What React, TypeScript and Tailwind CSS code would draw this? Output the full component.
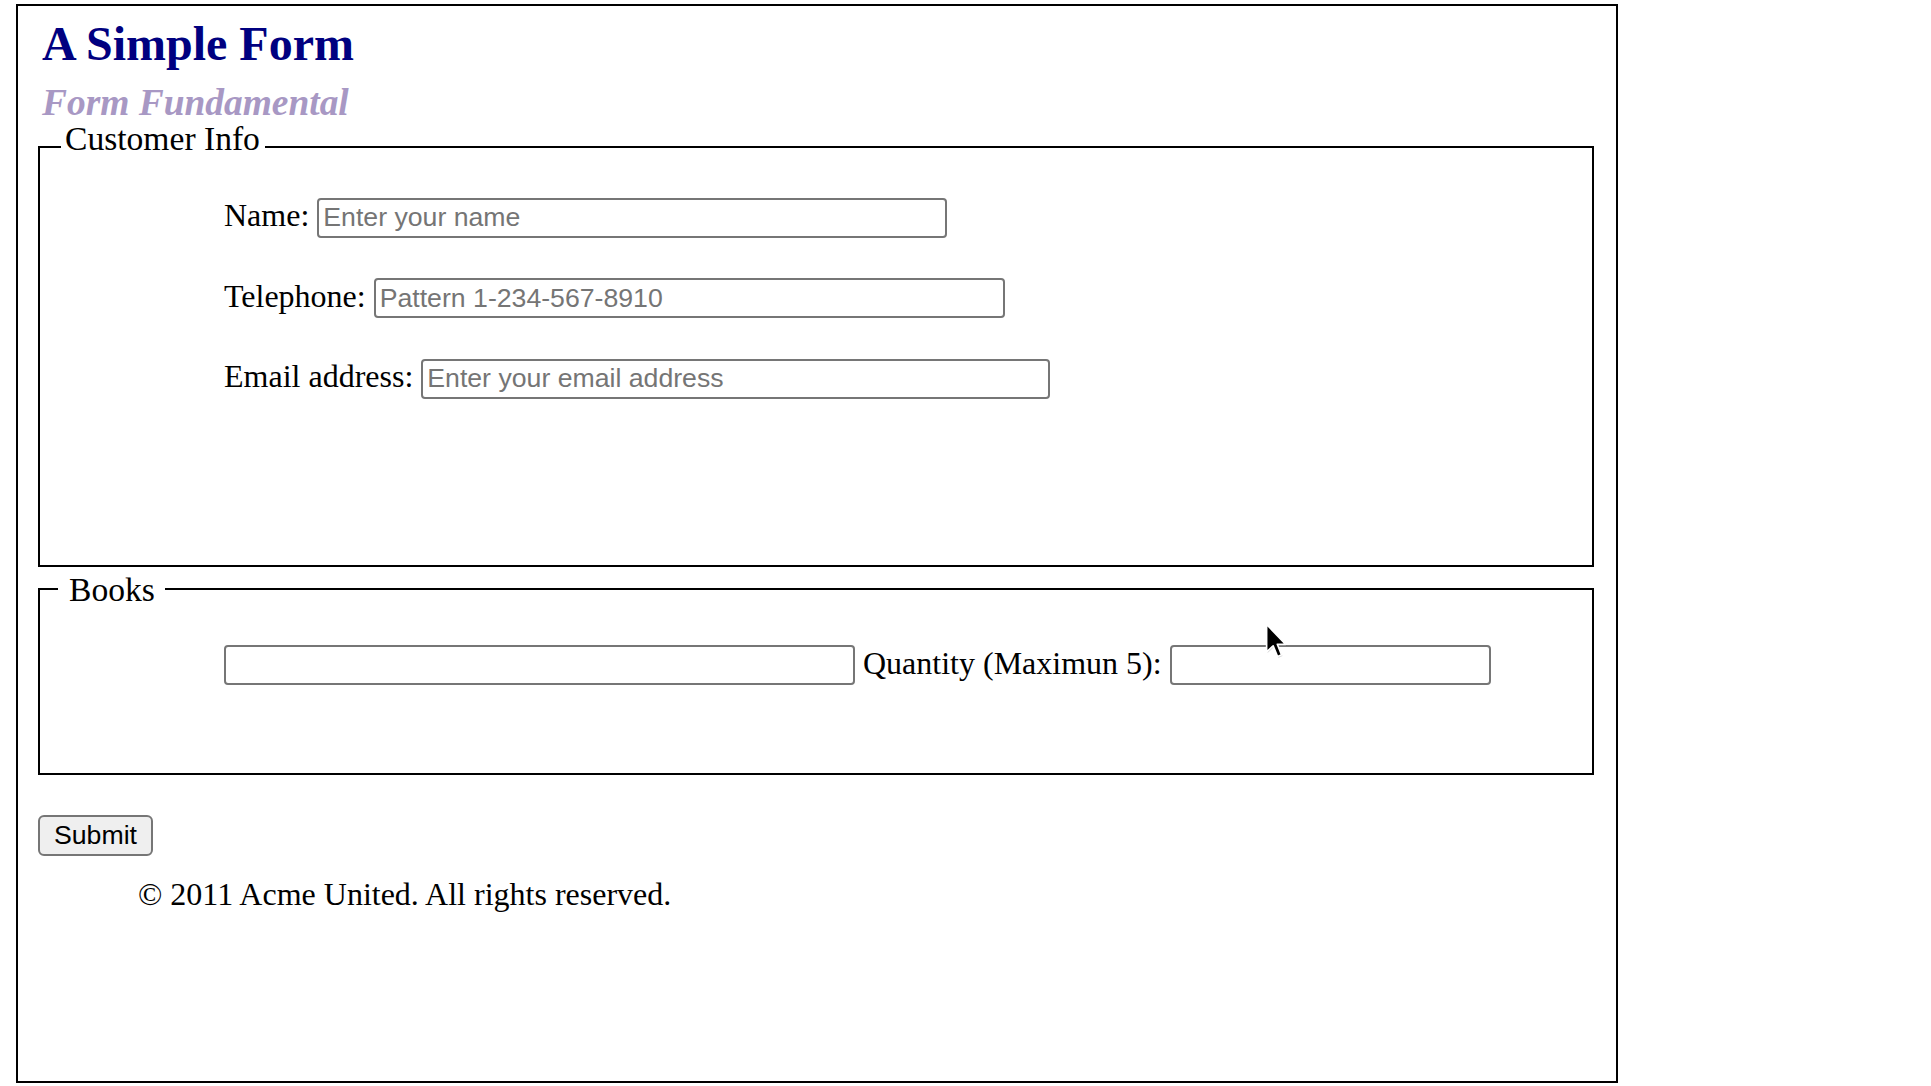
const inputCls =
  "inline-block h-[40px] rounded-[4px] border-2 border-[#767676] bg-white px-[4px] align-baseline font-['Liberation_Sans',Arial,sans-serif] text-[26.67px] leading-[normal] text-black outline-none placeholder:text-[#757575]"

function Cursor() {
  return (
    <svg
      className="pointer-events-none absolute left-[1247px] top-[617px]"
      width="24"
      height="37"
      viewBox="0 0 16 25"
    >
      <path
        d="M1.6 1.8 L1.6 20.3 L6 16.2 L9 23.4 L11.7 22.3 L8.8 15.2 L14.5 15.2 Z"
        fill="#000"
        opacity="0.18"
      />
      <path
        d="M1 1 L1 19.5 L5.4 15.4 L8.4 22.6 L11.1 21.5 L8.2 14.4 L13.9 14.4 Z"
        fill="#000"
        stroke="#fff"
        strokeWidth="1.1"
        strokeLinejoin="round"
      />
    </svg>
  )
}

export default function App() {
  return (
    <div className="min-h-screen bg-white font-['Liberation_Serif','Times_New_Roman',serif] text-[32px] text-black">
      <div className="relative ml-[16px] mt-[4px] h-[1079px] w-[1602px] border-2 border-black">
        <h1 className="mt-[14px] pl-[24px] text-[48px] font-bold leading-[48px] text-[#000080]">
          A Simple Form
        </h1>
        <h2 className="mt-[17px] pl-[24px] text-[37.44px] font-bold italic leading-[36px] text-[#a898c4]">
          Form Fundamental
        </h2>

        <form onSubmit={(e) => e.preventDefault()}>
          <fieldset className="ml-[20px] mr-[22px] mt-[1px] border-2 border-black pb-[166px]">
            <legend className="ml-[21px] pb-[15px] pl-[4px] pr-[5px] text-[33.6px] leading-[34px]">
              Customer Info
            </legend>
            <div className="pl-[184px] pt-[26px] leading-[37px]">
              <div>
                Name:{' '}
                <input className={`${inputCls} w-[630px]`} placeholder="Enter your name" />
              </div>
              <div className="mt-[40px]">
                Telephone:{' '}
                <input className={`${inputCls} w-[631px]`} placeholder="Pattern 1-234-567-8910" />
              </div>
              <div className="mt-[40px]">
                Email address:{' '}
                <input className={`${inputCls} w-[629px]`} placeholder="Enter your email address" />
              </div>
            </div>
          </fieldset>

          <fieldset className="ml-[20px] mr-[22px] mt-[4px] border-2 border-black pb-[88px]">
            <legend className="ml-[18px] pl-[11px] pr-[10px] text-[33.6px] leading-[37px]">Books</legend>
            <div className="pl-[184px] pt-[37px] leading-[37px]">
              <input className={`${inputCls} w-[631px]`} />
              {' '}Quantity (Maximun 5):{' '}
              <input className={`${inputCls} w-[321px]`} />
            </div>
          </fieldset>

          <div className="ml-[20px] mt-[40px]">
            <button
              type="submit"
              className="block h-[41px] w-[115px] rounded-[6px] border-2 border-[#767676] bg-[#efefef] font-['Liberation_Sans',Arial,sans-serif] text-[26.67px] leading-[normal] text-black"
            >
              Submit
            </button>
          </div>
        </form>

        <p className="mt-[20px] pl-[120px] leading-[37px]">© 2011 Acme United. All rights reserved.</p>

        <Cursor />
      </div>
    </div>
  )
}
